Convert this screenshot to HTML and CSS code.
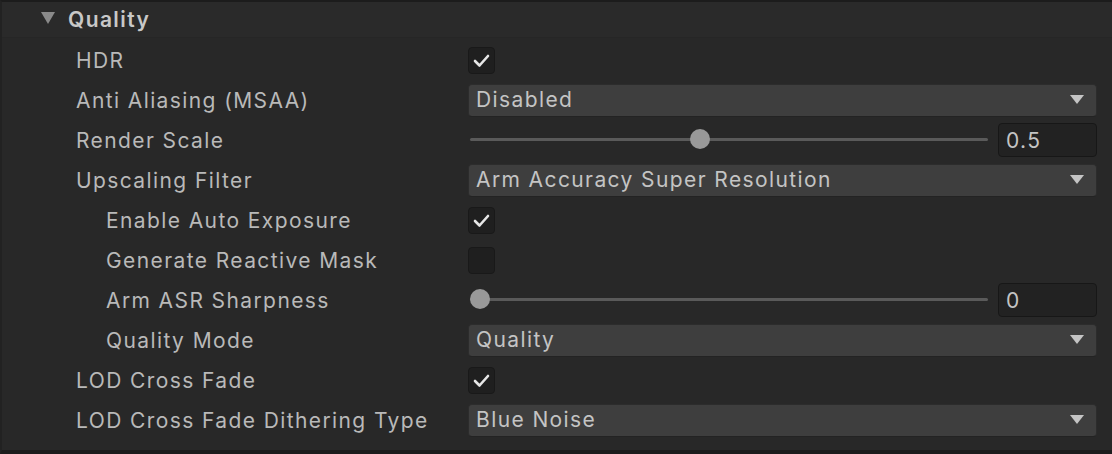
FILE: index.html
```html
<!DOCTYPE html>
<html>
<head>
<meta charset="utf-8">
<link rel="stylesheet" href="styles.css">
</head>
<body>
<div class="panel">
  <div class="header">
    <svg class="foldout" width="14" height="12" viewBox="0 0 14 12"><path d="M0 0 H14 L7 12 Z" fill="#8a8a8a"/></svg>
    <span class="title">Quality</span>
  </div>
  <div class="rows">
    <div class="row">
      <div class="label">HDR</div>
      <div class="control"><div class="check"><svg width="27" height="27" viewBox="0 0 27 27"><path d="M7 14 L11.5 18.5 L20 9" fill="none" stroke="#e6e6e6" stroke-width="2.6" stroke-linecap="round" stroke-linejoin="round"/></svg></div></div>
    </div>
    <div class="row">
      <div class="label">Anti Aliasing (MSAA)</div>
      <div class="control"><div class="dropdown"><span>Disabled</span><span class="arrow"></span></div></div>
    </div>
    <div class="row">
      <div class="label">Render Scale</div>
      <div class="control slider-ctl">
        <div class="slider"><div class="track"></div><div class="thumb" style="left: 42.5%"></div></div>
        <div class="number">0.5</div>
      </div>
    </div>
    <div class="row">
      <div class="label">Upscaling Filter</div>
      <div class="control"><div class="dropdown"><span>Arm Accuracy Super Resolution</span><span class="arrow"></span></div></div>
    </div>
    <div class="row">
      <div class="label sub">Enable Auto Exposure</div>
      <div class="control"><div class="check"><svg width="27" height="27" viewBox="0 0 27 27"><path d="M7 14 L11.5 18.5 L20 9" fill="none" stroke="#e6e6e6" stroke-width="2.6" stroke-linecap="round" stroke-linejoin="round"/></svg></div></div>
    </div>
    <div class="row">
      <div class="label sub">Generate Reactive Mask</div>
      <div class="control"><div class="check"></div></div>
    </div>
    <div class="row">
      <div class="label sub">Arm ASR Sharpness</div>
      <div class="control slider-ctl">
        <div class="slider"><div class="track"></div><div class="thumb" style="left: 0%"></div></div>
        <div class="number">0</div>
      </div>
    </div>
    <div class="row">
      <div class="label sub">Quality Mode</div>
      <div class="control"><div class="dropdown"><span>Quality</span><span class="arrow"></span></div></div>
    </div>
    <div class="row">
      <div class="label">LOD Cross Fade</div>
      <div class="control"><div class="check"><svg width="27" height="27" viewBox="0 0 27 27"><path d="M7 14 L11.5 18.5 L20 9" fill="none" stroke="#e6e6e6" stroke-width="2.6" stroke-linecap="round" stroke-linejoin="round"/></svg></div></div>
    </div>
    <div class="row">
      <div class="label">LOD Cross Fade Dithering Type</div>
      <div class="control"><div class="dropdown"><span>Blue Noise</span><span class="arrow"></span></div></div>
    </div>
  </div>
</div>
</body>
</html>
```
FILE: styles.css
```css
html, body {
  margin: 0;
  padding: 0;
  background: #282828;
}
body {
  font-family: Inter, "Noto Sans", sans-serif;
  font-size: 21px;
  letter-spacing: 1.4px;
  color: #b9b9b9;
}
.panel {
  width: 1112px;
  height: 454px;
  box-sizing: border-box;
  border-top: 2px solid #1c1c1c;
  border-left: 2px solid #222;
  border-bottom: 4px solid #1c1c1c;
  background: #282828;
  display: flex;
  flex-direction: column;
}
.header {
  height: 36px;
  display: flex;
  align-items: center;
  background: #2a2a2a;
  border-bottom: 1px solid #262626;
  box-sizing: border-box;
}
.foldout {
  margin-left: 39px;
  margin-right: 13px;
  margin-top: -3px;
}
.title {
  font-weight: 600;
  color: #c8c8c8;
  letter-spacing: 1.4px;
}
.rows {
  padding-top: 2px;
  display: flex;
  flex-direction: column;
}
.row {
  height: 40px;
  display: flex;
  align-items: center;
}
.label {
  width: 392px;
  padding-left: 74px;
  flex: none;
  white-space: nowrap;
}
.label.sub {
  width: 362px;
  padding-left: 104px;
}
.control {
  flex: 1;
  margin-right: 15px;
  display: flex;
  align-items: center;
}
.check {
  width: 27px;
  height: 27px;
  box-sizing: border-box;
  background: #1f1f1f;
  border: 1px solid #191919;
  border-radius: 4px;
}
.check svg {
  display: block;
  margin: -1px;
}
.dropdown {
  flex: 1;
  height: 33px;
  box-sizing: border-box;
  background: #3e3e3e;
  border: 1px solid #2c2c2c;
  border-bottom-color: #232323;
  border-radius: 4px;
  display: flex;
  align-items: center;
  justify-content: space-between;
  padding-left: 7px;
  padding-right: 12px;
  padding-bottom: 1px;
  color: #c4c4c4;
}
.arrow {
  width: 0;
  height: 0;
  border-left: 7px solid transparent;
  border-right: 7px solid transparent;
  border-top: 9px solid #c4c4c4;
}
.slider-ctl {
  gap: 10px;
}
.slider {
  flex: 1;
  position: relative;
  height: 24px;
  margin-left: 2px;
}
.track {
  position: absolute;
  left: 0;
  right: 0;
  top: 10px;
  height: 3px;
  background: #5a5a5a;
  border-radius: 2px;
}
.thumb {
  position: absolute;
  top: 1px;
  width: 20px;
  height: 20px;
  border-radius: 50%;
  background: #999;
}
.number {
  width: 99px;
  height: 34px;
  box-sizing: border-box;
  background: #222;
  border: 1px solid #171717;
  border-radius: 4px;
  padding-left: 7px;
  display: flex;
  align-items: center;
  color: #c4c4c4;
}
```
